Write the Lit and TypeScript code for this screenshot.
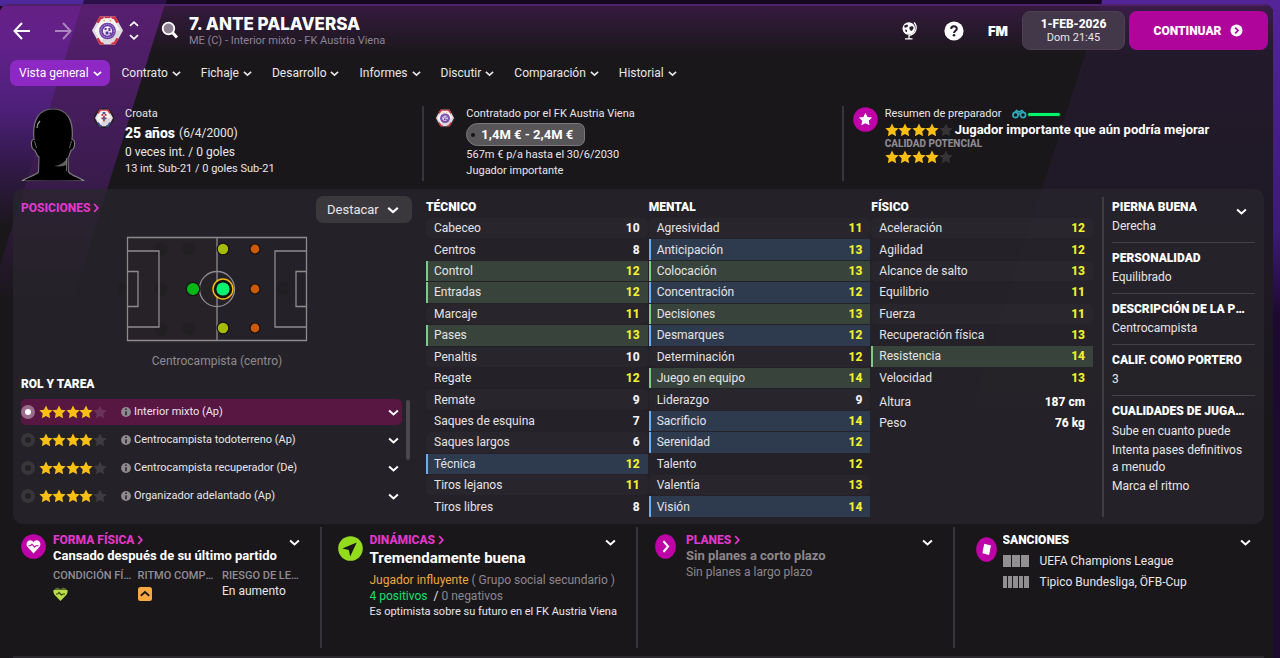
import { LitElement, html, svg, css } from "lit";
import { customElement, property, state } from "lit/decorators.js";
import { classMap } from "lit/directives/class-map.js";

const STAR = "M12 .8l3.5 7.3 7.9 1.1-5.8 5.5 1.5 8L12 18.9l-7.1 3.8 1.5-8L.6 9.2l7.9-1.1z";

@customElement("star-rating")
class StarRating extends LitElement {
  @property({ type: Number }) value = 0;
  static styles = css`
    :host { display: inline-flex; flex: none; }
    svg { width: 14px; height: 14px; display: block; margin-right: -1px; }
    svg:nth-child(even) { margin-right: 0; }
    .on { fill: #f9bf14; }
    .off { fill: #fff; opacity: 0.12; }
  `;
  render() {
    return [1, 2, 3, 4, 5].map(
      (n) => html`<svg viewBox="0 0 24 24" aria-hidden="true"><path class=${n <= this.value ? "on" : "off"} d=${STAR} /></svg>`
    );
  }
}

@customElement("chevron-icon")
class ChevronIcon extends LitElement {
  @property({ type: Number }) size = 9;
  @property() dir = "down";
  static styles = css`
    :host { display: inline-flex; flex: none; }
    svg { display: block; fill: none; stroke: currentColor; stroke-width: 1.8; stroke-linecap: butt; }
    .right { transform: rotate(-90deg); }
    .up { transform: rotate(180deg); }
  `;
  render() {
    return html`<svg class=${this.dir} width=${this.size} height=${this.size} viewBox="0 0 10 10" aria-hidden="true"><path d="M1 3.2 5 6.8 9 3.2" /></svg>`;
  }
}

@customElement("club-crest")
class ClubCrest extends LitElement {
  @property() kind = "club";
  static styles = css`
    :host { display: block; flex: none; }
    svg { display: block; width: 100%; height: 100%; }
  `;
  render() {
    const club = svg`
      <circle cx="16" cy="16.5" r="8.600" fill="#6b3fa6"/>
      <circle cx="16" cy="16.5" r="6.900" fill="none" stroke="#cdbde2" stroke-width=".8" stroke-dasharray="1.200 1"/>
      <circle cx="16" cy="16.5" r="4.800" fill="#efe9f6"/>
      <path d="M13 13.500h2v2h-2zM17 13.500h2v3h-2zM14 17h3v3h-3zM18 18h2v2h-2z" fill="#5b3196"/>
      <circle cx="12.500" cy="5.800" r=".9" fill="#e4a63c"/><circle cx="19" cy="5.800" r=".9" fill="#e4a63c"/>`;
    const nation = svg`
      <path d="M11.500 9 20.500 9 20.500 18 16 24 11.500 18z" fill="#f2eeee"/>
      <path d="M11.500 9h3v3h-3zM17.500 9h3v3h-3zM14.500 12h3v3h-3zM11.500 15h3v3h-3zM17.500 15h3v3h-3zM14.500 18h3v4h-3z" fill="#c8313a"/>
      <path d="M13.500 5.500h5v4h-5zM14 14h4v6h-4z" fill="#47639b"/>`;
    const foot = this.kind === "nation" ? "#2c3f9a" : "#d62f3f";
    return html`<svg viewBox="0 0 32 32" aria-hidden="true">
      <path d="M8 1.500h16l8 14.500-8 14.500H8L0 16z" fill="#dedade"/>
      <path d="M8 1.500h5l-6 7-2.500-1zM19 1.500h5l3.500 6-2.500 1z" fill="#d62f3f"/>
      <path d="M13 1.500h6v1.500h-6z" fill="#d62f3f"/>
      <path d="M4.500 24.500l2.500-1 6 7H8zM27.500 24.500l-2.500-1-6 7h5z" fill=${foot}/>
      <path d="M9.500 4h13l6.800 12-6.800 12h-13L2.700 16z" fill="#f5f2f4"/>
      <path d="M16 16 29.300 16 22.500 28 9.500 28z" fill="#c5bfc6" opacity=".55"/>
      ${this.kind === "nation" ? nation : club}
    </svg>`;
  }
}

type Hl = "" | "g" | "b";
type Attr = [string, number, Hl];

const TECHNICAL: Attr[] = [
  ["Cabeceo", 10, ""], ["Centros", 8, ""], ["Control", 12, "g"], ["Entradas", 12, "g"], ["Marcaje", 11, ""],
  ["Pases", 13, "g"], ["Penaltis", 10, ""], ["Regate", 12, ""], ["Remate", 9, ""], ["Saques de esquina", 7, ""],
  ["Saques largos", 6, ""], ["Técnica", 12, "b"], ["Tiros lejanos", 11, ""], ["Tiros libres", 8, ""],
];
const MENTAL: Attr[] = [
  ["Agresividad", 11, ""], ["Anticipación", 13, "b"], ["Colocación", 13, "g"], ["Concentración", 12, "b"],
  ["Decisiones", 13, "g"], ["Desmarques", 12, "b"], ["Determinación", 12, ""], ["Juego en equipo", 14, "g"],
  ["Liderazgo", 9, ""], ["Sacrificio", 14, "b"], ["Serenidad", 12, "b"], ["Talento", 12, ""], ["Valentía", 13, ""],
  ["Visión", 14, "b"],
];
const PHYSICAL: Attr[] = [
  ["Aceleración", 12, ""], ["Agilidad", 12, ""], ["Alcance de salto", 13, ""], ["Equilibrio", 11, ""],
  ["Fuerza", 11, ""], ["Recuperación física", 13, ""], ["Resistencia", 14, "g"], ["Velocidad", 13, ""],
];

@customElement("attribute-table")
class AttributeTable extends LitElement {
  @property() heading = "";
  @property({ attribute: false }) rows: Attr[] = [];
  static styles = css`
    :host { display: block; min-width: 0; }
    table { width: 100%; border-collapse: separate; border-spacing: 0 1px; }
    caption { text-align: left; font: 900 12px/20px Roboto, "Liberation Sans", sans-serif; color: #fff; }
    th, td { padding: 0; height: 20px; font-size: 12px; line-height: 16px; }
    .tall { height: 301px; }
    .short { height: 172px; }
    th { font-weight: 400; text-align: left; color: #e6e3e6; border-left: 2px solid transparent; padding-left: 6px; }
    td { font-weight: 800; text-align: right; color: #f3f1f3; padding-right: 8px; }
    .hot { color: #f1f22f; }
    .plain:nth-child(odd) > * { background: rgba(255, 255, 255, 0.02); }
    .plain:nth-child(odd) > th { border-radius: 5px 0 0 5px; }
    .plain:nth-child(odd) > td { border-radius: 0 5px 5px 0; }
    .g > * { background: #37433b; }
    .g > th { border-left-color: #7ecb86; }
    .b > * { background: #2e3b4e; }
    .b > th { border-left-color: #67aef2; }
  `;
  render() {
    return html`<table class=${this.rows.length > 8 ? "tall" : "short"}>
      <caption>${this.heading}</caption>
      <tbody>
        ${this.rows.map(
          ([name, value, hl]) => html`<tr class=${hl || "plain"}>
            <th scope="row">${name}</th>
            <td class=${value > 10 ? "hot" : ""}>${value}</td>
          </tr>`
        )}
      </tbody>
    </table>`;
  }
}

const TABS = ["Vista general", "Contrato", "Fichaje", "Desarrollo", "Informes", "Discutir", "Comparación", "Historial"];
const ROLES = ["Interior mixto (Ap)", "Centrocampista todoterreno (Ap)", "Centrocampista recuperador (De)", "Organizador adelantado (Ap)"];
const FACTS: [string, string][] = [
  ["PIERNA BUENA", "Derecha"],
  ["PERSONALIDAD", "Equilibrado"],
  ["DESCRIPCIÓN DE LA POSICIÓN", "Centrocampista"],
  ["CALIF. COMO PORTERO", "3"],
];

@customElement("app-root")
class AppRoot extends LitElement {
  @state() private role = 0;
  @state() private tab = 0;

  static styles = css`
    :host {
      display: block; position: relative; box-sizing: border-box; min-height: 100vh; overflow: hidden;
      padding: 4px 7px 0 0; background: linear-gradient(#14081f, #1c0a30 50%);
      font-family: Roboto, "Liberation Sans", sans-serif; font-size: 12px; line-height: 16px; color: #e9e6e9;
    }
    *, *::before { box-sizing: border-box; }
    h1, h2, h3, p, ul { margin: 0; padding: 0; list-style: none; }
    button, select { font: inherit; color: inherit; border: 0; background: none; padding: 0; cursor: pointer; }
    a { color: inherit; text-decoration: none; }
    .backdrop { position: absolute; top: 0; display: block; pointer-events: none; }
    .bl { left: 0; }
    .br { right: 0; }
    .frame {
      position: relative; min-height: calc(100vh - 4px); border-radius: 9px 9px 0 0; overflow: hidden;
      display: flex; flex-direction: column; background: #1a171b;
    }
    .frame > .content { position: relative; display: flex; flex-direction: column; flex: 1; }
    .sheen { position: absolute; top: 0; left: 0; right: 0; height: 50px; border-top: 2px solid #50206b;
      background: linear-gradient(rgba(90, 30, 110, 0.42), rgba(90, 30, 110, 0)); }

    header { display: flex; align-items: center; height: 53px; padding: 0 5px 0 11px; }
    .icon-btn { display: flex; align-items: center; justify-content: center; width: 22px; height: 26px; flex: none; }
    .nav { display: flex; gap: 19px; }
    .nav svg { fill: none; stroke: #fff; stroke-width: 2; }
    .dim { opacity: 0.45; }
    .crest-lg { width: 31px; height: 31px; margin-left: 18px; }
    .steps { display: flex; flex-direction: column; gap: 3px; margin-left: 6px; color: #fff; }
    .steps button { display: flex; height: 10px; }
    .search { margin: 2px 9px 0 21px; }
    .who { flex: 1; min-width: 0; }
    h1 { font: 800 17px/20px Inter, Roboto, sans-serif; color: #fff; white-space: nowrap; }
    .who p { font-size: 11px; line-height: 13px; color: #8f8295; white-space: nowrap; }
    .tools { display: flex; align-items: center; gap: 22px; margin-right: 13px; }
    .fm { font: 900 13px/16px Inter, Roboto, sans-serif; color: #fff; width: 22px; text-align: center; }
    .date { width: 103px; height: 39px; border-radius: 8px; background: #43374a; text-align: center; border: 1px solid #4d4153;
      font-size: 11px; line-height: 13px; margin-right: 4px; }
    .date b { display: block; font-size: 12px; line-height: 14px; color: #fff; font-weight: 800; }
    .continue { width: 139px; height: 39px; border-radius: 8px; background: #b0059a; color: #fff; font-size: 12px; font-weight: 900;
      display: flex; align-items: center; justify-content: center; gap: 9px; }

    .tabs { display: flex; gap: 5px; padding: 3px 10px 0; }
    .tab { display: flex; align-items: center; gap: 4px; height: 26px; padding: 0 7px 0 8px; border-radius: 7px; white-space: nowrap; }
    .tab.on { background: #8e28c4; color: #fff; padding: 0 8px 0 9px; margin-right: -1px; }

    .info { display: grid; grid-template-columns: repeat(3, 1fr); padding: 20px 10px 8px 5px; }
    .cell { display: flex; height: 75px; border-right: 2px solid #38343b; padding-left: 11px; min-width: 0; white-space: nowrap; }
    .cell:last-child { border: 0; padding-left: 10px; }
    .cell:first-child { padding-left: 16px; }
    .portrait { width: 64px; height: 73px; margin-top: 2px; flex: none; }
    .badge { display: grid; place-items: center; width: 20px; height: 20px; margin: 2px 0 0; border-radius: 50%; background: #242126; flex: none; }
    .badge club-crest { width: 18px; height: 18px; }
    .cell .badge.nat { margin-left: 9px; }
    .lines { margin-left: 11px; font-size: 11px; min-width: 0; }
    .lines > div { display: flex; align-items: center; }
    .big { font-size: 14px; line-height: 22px; font-weight: 800; color: #fff; gap: 4px; }
    .big span { font-size: 12px; font-weight: 400; color: #e9e6e9; }
    .md { font-size: 12px; line-height: 17px; }
    .tag { display: flex; align-items: center; gap: 6px; width: 119px; height: 23px; margin: 1px 0; padding-left: 4px; background: #59565a; border: 1px solid #7b787c;
      border-radius: 12px 7px 7px 12px; font-size: 13px; font-weight: 700; color: #fff; }
    .hole { width: 4px; height: 4px; border-radius: 50%; background: #161418; }
    .disc { width: 25px; height: 25px; flex: none; display: block; }
    .cell .disc { margin: 1px 0 0 -1px; }
    .knowledge { display: inline-flex; align-items: center; margin-left: 10px; }
    .bar { width: 34px; height: 5px; border: 1px solid #0b2b18; border-radius: 3px; background: #00f56b; }
    .scout { margin-left: 7px; }
    .scout b { margin-left: 3px; font-size: 13px; color: #fff; }
    .scout small { font-size: 10px; line-height: 12px; font-weight: 800; color: #8e8a8f; }

    .panel { display: flex; margin: 0 9px 0 13px; min-height: 335px; border-radius: 10px; background: rgba(40, 38, 44, 0.74); }
    .left { flex: 0 1 404px; padding: 7px 5px 0 8px; min-width: 300px; }
    .head { display: flex; justify-content: space-between; align-items: flex-start; }
    .link { display: inline-flex; align-items: center; gap: 1px; color: #e337cb; font-size: 12px; font-weight: 800; line-height: 16px; }
    .head .link { margin-top: 4px; }
    .picker { display: grid; grid-template-columns: 1fr 25px; align-items: center; width: 96px; height: 27px; border-radius: 7px; background: #3b383d; }
    .picker select { grid-area: 1 / 1 / 2 / 3; height: 27px; padding: 0 11px; appearance: none; font-size: 13px; }
    .picker chevron-icon { grid-area: 1 / 2; pointer-events: none; color: #fff; }
    .pitch { display: block; width: 196px; height: 106px; margin: 13px auto 0 97px; }
    .pos { text-align: center; margin: 10px 0 6px; padding-left: 1px; color: #8f8a90; font-size: 12px; line-height: 18px; }
    h2 { font-size: 12px; line-height: 16px; font-weight: 900; color: #fff; white-space: nowrap; overflow: hidden; text-overflow: ellipsis; }
    .roles { display: flex; margin-top: 7px; }
    .roles ul { flex: 1; display: flex; flex-direction: column; gap: 2px; }
    .role { display: flex; align-items: center; height: 26px; border-radius: 5px; padding-right: 3px; font-size: 11px; }
    .role.on { background: #571742; }
    .role label { display: flex; align-items: center; flex: 1; cursor: pointer; }
    .role button { display: flex; color: #fff; }
    .role input { appearance: none; width: 14px; height: 14px; margin: 0 4px 0 0; border-radius: 50%; border: 4px solid #39363b; background: #232126; }
    .role input:checked { border-color: #9a6d8d; background: #fff; }
    .role .i { margin: 0 3px 0 15px; flex: none; }
    .scroll { width: 4px; height: 60px; border-radius: 2px; background: #4b484d; margin: 1px 2px 0 4px; }

    .attrs { flex: 1 1 676px; display: grid; grid-template-columns: repeat(3, 1fr); gap: 1px; padding: 8px 9px 0 9px; min-width: 0; }
    .sizes { display: grid; grid-template-columns: auto auto; justify-content: space-between; margin: 3px 0 0; padding: 0 8px; font-size: 12px; line-height: 21px; }
    .sizes dt { color: #e6e3e6; }
    .sizes dd { margin: 0; text-align: right; font-weight: 800; color: #fff; }
    .facts { flex: 0 0 162px; min-width: 0; margin: 8px 0 7px; padding: 0 9px 0 8px; border-left: 2px solid #3f3c42; }
    .facts section { padding: 7px 0 8px; border-bottom: 1px solid #444147; }
    .facts section:first-child { padding-top: 2px; }
    .facts section:last-child { border: 0; }
    .facts section > h2 { margin-right: 5px; }
    .facts p { font-size: 12px; margin-top: 3px; }
    .facts .traits { margin-top: 4px; padding-right: 7px; }
    .facts .traits p { line-height: 17px; margin: 0 0 2px; }
    .row { display: flex; justify-content: space-between; align-items: center; padding-right: 8px; color: #fff; }
    .row button { display: flex; padding-top: 5px; }
    .facts .row { height: 16px; }
    .facts .row button { padding-top: 8px; }

    .bottom { flex: 1; display: grid; grid-template-columns: repeat(4, 1fr); margin: 3px 2px 8px 5px; min-height: 121px; }
    .block { display: flex; align-items: flex-start; border-right: 2px solid #38343b; padding: 5px 19px 0 15px; min-width: 0; }
    .block:last-child { border: 0; }
    .block > .disc { margin: 2px 0 0 1px; }
    .block > .arrow { margin-top: 4px; }
    .block > .card { margin-top: 5px; }
    .block > .next { width: 21px; margin-left: 2px; margin-right: 3px; }
    .block > .card { width: 21px; margin-left: 6px; margin-right: -1px; }
    .txt { flex: 1; min-width: 0; margin-left: 7px; white-space: nowrap; }
    .txt .row { padding: 0 1px 0 0; line-height: 16px; height: 16px; }
    .txt b { font-weight: 700; color: #fff; font-size: 13px; }
    .minis { display: grid; grid-template-columns: repeat(3, minmax(0, 1fr)); gap: 4px; margin: 4px -2px 0 0; }
    .minis h3 { font-size: 11px; line-height: 15px; font-weight: 500; color: #928e93; overflow: hidden; text-overflow: ellipsis; }
    .minis svg { display: block; margin-top: 4px; }
    .txt b.xl { display: block; font-size: 15px; line-height: 18px; margin: 1px 0 5px; }
    .grey, .txt b.grey { color: #8b878c; }
    .orange { color: #eea63c; }
    .green { color: #12e06a; }
    .sm { font-size: 11px; line-height: 15px; }
    .ban { display: flex; align-items: center; gap: 11px; height: 21px; font-size: 12px; }
    .row + .ban { margin-top: 2px; }
    .cards { display: flex; gap: 1px; width: 26px; height: 12px; }
    .cards i { flex: 1; background: #928f92; }
    .rule { height: 2px; margin: 0 9px 0 13px; background: #2c292e; }
  `;

  private icon(name: string) {
    const glyph: Record<string, unknown> = {
      star: svg`<path fill="#fff" transform="translate(5.500 5.200) scale(.58)" d=${STAR} />`,
      heart: svg`<path fill="#fff" d="M12.500 19.500 6.200 12.600C4.500 9.500 6.500 6.300 9.300 6.300c1.500 0 2.600.8 3.200 2 .6-1.200 1.700-2 3.200-2 2.800 0 4.800 3.200 3.100 6.300z"/><path fill="none" stroke="#b0059a" stroke-width="1.100" d="M7.500 11.700h2l1.500-1.500 2.500 2.700 1.500-1.200h2.500"/>`,
      arrow: svg`<path fill="#1a171b" d="M18.700 6.400 4.300 12.600l6.500 1.300 1.400 6.600z"/>`,
      next: svg`<path fill="none" stroke="#fff" stroke-width="2.300" d="M10 7.200l5.500 5.300-5.500 5.300"/>`,
      card: svg`<path fill="#fff" d="M9.800 6.800l8 1.700-2.200 9.600-8-1.800z"/>`,
    };
    const fill = name === "arrow" ? "#93dc1d" : "#be02a8";
    return html`<svg class="disc ${name}" viewBox="0 0 25 25" preserveAspectRatio="none" aria-hidden="true"><circle cx="12.500" cy="12.500" r="12.300" fill=${fill}/>${glyph[name]}</svg>`;
  }

  private pitch() {
    const ghosts = [[43, 13], [71, 13], [43, 53], [2, 53], [43, 93], [71, 93], [165, 53]];
    return html`<svg class="pitch" viewBox="0 0 196 106" role="img" aria-label="Posiciones">
      <rect x="9" y="2" width="89" height="102" fill="#2a2226" opacity=".4"/>
      ${ghosts.map(([x, y]) => svg`<circle cx=${x} cy=${y} r="6.500" fill="#1d1b1f" opacity=".4"/>`)}
      <g fill="none" stroke="#8e8b8f" stroke-width="1.300">
        <path d="M9.500 1.500h179v103h-179zM99 1.500v103M9.500 15H41v76H9.500M9.500 35.500H20v35H9.500M188.500 15H157v76h31.500M188.500 35.500H178v35h10.500"/>
        <circle cx="99" cy="53" r="17.500"/>
      </g>
      <g stroke="#151216" stroke-width="1.200">
        ${[13, 92].map((y) => svg`<circle cx="105" cy=${y} r="5.800" fill="#a5bb06"/>`)}
        ${[13, 53, 92].map((y) => svg`<circle cx="137" cy=${y} r="5" fill="#cd5a05"/>`)}
        <circle cx="75" cy="53" r="6.700" fill="#07b718"/>
        <circle cx="105" cy="53" r="10" fill="#151216" stroke="#f4b914" stroke-width="1.500"/>
        <circle cx="105" cy="53" r="7.200" fill="#05f46f"/>
      </g>
    </svg>`;
  }

  private portrait() {
    return html`<svg class="portrait" viewBox="0 0 64 73" role="img" aria-label="Retrato">
      <defs><linearGradient id="rim"><stop offset="0" stop-color="#8d8d8d"/><stop offset=".5" stop-color="#555"/><stop offset="1" stop-color="#8d8d8d"/></linearGradient></defs>
      <path fill="#000" stroke="url(#rim)" stroke-width="1.200" d="M1 73C6 69 14 68 17.500 64L18 49C15 47 15 43 13.500 42 10 41 9 31 13 31.500 11 12 18 1 32 1S53 12 51 31.500C55 31 54 41 50.500 42 49 43 49 47 47 50L47.500 64C51 68 58 69 63 73z"/>
      <path fill="none" stroke="#999" stroke-width="1.300" d="M16 20c0-3 1-5 3-7"/>
      <path fill="none" stroke="#666" stroke-width="1" d="M13.500 33l2 7M50.500 33l-2 7M45.500 50v13"/>
      <path fill="#777" opacity=".8" d="M46 50c-2 4-6 7-13 8 6 .8 10 .5 13-1.500z"/>
    </svg>`;
  }

  private head(title: string, link = true) {
    return html`<div class="row">
      ${link ? html`<h2><a class="link" href="#">${title}<chevron-icon dir="right" size="10"></chevron-icon></a></h2>` : html`<h2>${title}</h2>`}
      <button aria-label="Opciones"><chevron-icon size="11"></chevron-icon></button>
    </div>`;
  }

  render() {
    return html`
      <svg class="backdrop br" width="200" height="658" viewBox="0 0 200 658" aria-hidden="true">
        <defs><linearGradient id="gr" x2="0" y2="1"><stop offset="0" stop-color="#542499"/><stop offset=".35" stop-color="#3c1a78"/><stop offset=".48" stop-color="#1c0a30"/></linearGradient></defs>
        <path fill="url(#gr)" d="M22 0h178v658H-80z"/>
      </svg>
      <svg class="backdrop bl" width="200" height="6" viewBox="0 0 200 6" aria-hidden="true">
        <path fill="#2b1049" d="M0 0h167l-2 6H0z"/><path fill="#4d289b" d="M0 0h84l-2 6H0z"/>
      </svg>
      <div class="frame">
        <svg class="backdrop bl" width="170" height="320" viewBox="0 0 170 320" aria-hidden="true">
          <defs>
            <linearGradient id="g1" x2="0" y2="1"><stop offset="0" stop-color="#561f70"/><stop offset=".55" stop-color="#3a1b4d"/><stop offset=".92" stop-color="#1a171b"/></linearGradient>
            <linearGradient id="g2" x2="0" y2="1"><stop offset="0" stop-color="#6f2197"/><stop offset=".4" stop-color="#4d2079"/><stop offset=".6" stop-color="#34194c"/><stop offset=".85" stop-color="#1a171b"/></linearGradient>
          </defs>
          <path fill="url(#g1)" d="M0 0h165L65 320H0z"/>
          <path fill="url(#g2)" d="M0 0h82L0 262z"/>
        </svg>
        <svg class="backdrop br" width="340" height="658" viewBox="0 0 340 658" aria-hidden="true">
          <defs><linearGradient id="g3" x2="0" y2="1"><stop offset="0" stop-color="#231a2c"/><stop offset=".4" stop-color="#1f1926"/><stop offset=".75" stop-color="#1a171b"/></linearGradient></defs>
          <path fill="url(#g3)" d="M168 0h172v560L-10 560z"/>
        </svg>
        <div class="sheen"></div>
        <div class="content">
          <header>
            <div class="nav">
              <button class="icon-btn" aria-label="Atrás"><svg width="20" height="20" viewBox="0 0 20 20"><path d="M18 10H3M10 2 2.500 10l7.500 8"/></svg></button>
              <button class="icon-btn dim" aria-label="Adelante"><svg width="20" height="20" viewBox="0 0 20 20"><path d="M2 10h15M10 2l7.500 8-7.500 8"/></svg></button>
            </div>
            <club-crest class="crest-lg"></club-crest>
            <div class="steps">
              <button aria-label="Anterior"><chevron-icon dir="up" size="10"></chevron-icon></button>
              <button aria-label="Siguiente"><chevron-icon size="10"></chevron-icon></button>
            </div>
            <button class="search" aria-label="Buscar"><svg width="20" height="20" viewBox="0 0 20 20"><path d="M12 12l5 5.500" stroke="#fff" stroke-width="3"/><circle cx="8.500" cy="8.500" r="5.800" fill="#8d8091" stroke="#fff" stroke-width="1.800"/></svg></button>
            <div class="who">
              <h1>7. ANTE PALAVERSA</h1>
              <p>ME (C) - Interior mixto - FK Austria Viena</p>
            </div>
            <div class="tools">
              <button class="icon-btn" aria-label="Mundo"><svg width="18" height="19" viewBox="0 0 18 19"><circle cx="7.800" cy="7.500" r="6.300" fill="#fff"/><path d="M3.300 4.500l3-1 1 1.500-2 1.500H3.300zM8.300 6l3-1 1.500 2-2 3-2-1zM4 8.500l2 .5v2L4.500 10.500zM10 2.500l2 1" fill="#2b1a33"/><path d="M13 1.500c4 4 2.500 12-5.500 13M8 14.500v3M4 17.800h7.500" fill="none" stroke="#fff" stroke-width="1.300"/></svg></button>
              <button class="icon-btn" aria-label="Ayuda"><svg width="20" height="20" viewBox="0 0 20 20"><circle cx="10" cy="10" r="9.600" fill="#fff"/><path d="M7.200 8c0-3.600 5.600-3.500 5.600-.3 0 2-2.700 2-2.700 4.200" fill="none" stroke="#251a2b" stroke-width="2"/><circle cx="10" cy="14.300" r="1.300" fill="#251a2b"/></svg></button>
              <button class="fm">FM</button>
            </div>
            <button class="date"><b>1-FEB-2026</b>Dom 21:45</button>
            <button class="continue">CONTINUAR
              <svg width="13" height="13" viewBox="0 0 13 13" aria-hidden="true"><circle cx="6.500" cy="6.500" r="6" fill="#fff"/><path d="M5.200 3.700 8 6.500 5.200 9.300" fill="none" stroke="#b0059a" stroke-width="1.700"/></svg>
            </button>
          </header>

          <nav class="tabs">
            ${TABS.map((t, i) => html`<button class=${classMap({ tab: true, on: i === this.tab })} @click=${() => (this.tab = i)}>${t}<chevron-icon></chevron-icon></button>`)}
          </nav>

          <div class="info">
            <div class="cell">
              ${this.portrait()}
              <span class="badge nat"><club-crest kind="nation"></club-crest></span>
              <div class="lines">
                <div>Croata</div>
                <div class="big">25 años <span>(6/4/2000)</span></div>
                <div class="md">0 veces int. / 0 goles</div>
                <div>13 int. Sub-21 / 0 goles Sub-21</div>
              </div>
            </div>
            <div class="cell">
              <span class="badge"><club-crest></club-crest></span>
              <div class="lines">
                <div>Contratado por el FK Austria Viena</div>
                <div class="tag"><i class="hole"></i>1,4M € - 2,4M €</div>
                <div>567m € p/a hasta el 30/6/2030</div>
                <div>Jugador importante</div>
              </div>
            </div>
            <div class="cell">
              ${this.icon("star")}
              <div class="lines scout">
                <div>Resumen de preparador
                  <span class="knowledge">
                    <svg width="15" height="10" viewBox="0 0 15 10" aria-hidden="true"><g fill="none" stroke="#2fa9b8" stroke-width="1.700"><circle cx="3.500" cy="6" r="2.600"/><circle cx="11" cy="6" r="2.600"/><path d="M6 5h2.500M3 3 4.500 1.500 7.200 3 10 1.500 11.500 3"/></g></svg>
                    <span class="bar"></span>
                  </span>
                </div>
                <div><star-rating value="4"></star-rating><b>Jugador importante que aún podría mejorar</b></div>
                <div><small>CALIDAD POTENCIAL</small></div>
                <div><star-rating value="4"></star-rating></div>
              </div>
            </div>
          </div>

          <main class="panel">
            <section class="left">
              <div class="head">
                <a class="link" href="#">POSICIONES<chevron-icon dir="right" size="10"></chevron-icon></a>
                <label class="picker">
                  <select aria-label="Destacar"><option>Destacar</option></select>
                  <chevron-icon size="12"></chevron-icon>
                </label>
              </div>
              ${this.pitch()}
              <p class="pos">Centrocampista (centro)</p>
              <h2>ROL Y TAREA</h2>
              <div class="roles">
                <ul>
                  ${ROLES.map(
                    (r, i) => html`<li class=${classMap({ role: true, on: i === this.role })}>
                      <label>
                        <input type="radio" name="role" .checked=${i === this.role} @change=${() => (this.role = i)} />
                        <star-rating value="4"></star-rating>
                        <svg class="i" width="10" height="10" viewBox="0 0 10 10" aria-hidden="true"><circle cx="5" cy="5" r="4.900" fill="#8f8a90"/><path d="M5 4.200v4M5 1.600v1.500" stroke="#232126" stroke-width="1.500" fill="none"/></svg>
                        ${r}
                      </label>
                      <button aria-label="Ver tareas"><chevron-icon size="11"></chevron-icon></button>
                    </li>`
                  )}
                </ul>
                <div class="scroll"></div>
              </div>
            </section>

            <section class="attrs">
              <attribute-table heading="TÉCNICO" .rows=${TECHNICAL}></attribute-table>
              <attribute-table heading="MENTAL" .rows=${MENTAL}></attribute-table>
              <div>
                <attribute-table heading="FÍSICO" .rows=${PHYSICAL}></attribute-table>
                <dl class="sizes">
                  <dt>Altura</dt><dd>187 cm</dd>
                  <dt>Peso</dt><dd>76 kg</dd>
                </dl>
              </div>
            </section>

            <aside class="facts">
              ${FACTS.map(
                ([k, v], i) => html`<section>
                  ${i === 0 ? html`<div class="row"><h2>${k}</h2><button aria-label="Opciones"><chevron-icon size="11"></chevron-icon></button></div>` : html`<h2>${k}</h2>`}
                  <p>${v}</p>
                </section>`
              )}
              <section>
                <h2>CUALIDADES DE JUGADOR</h2>
                <div class="traits">
                  <p>Sube en cuanto puede</p>
                  <p>Intenta pases definitivos a menudo</p>
                  <p>Marca el ritmo</p>
                </div>
              </section>
            </aside>
          </main>

          <div class="bottom">
            <section class="block">
              ${this.icon("heart")}
              <div class="txt">
                ${this.head("FORMA FÍSICA")}
                <b>Cansado después de su último partido</b>
                <div class="minis">
                  <div><h3>CONDICIÓN FÍSICA</h3>
                    <svg width="15" height="15" viewBox="0 0 15 15" aria-hidden="true"><path fill="#5d6a31" d="M1 3.500C2 0 6 0 7.500 2.500 9 0 13 0 14 3.500z"/><path fill="#b9de48" d="M.5 3h14c.5 2-.5 4-1.500 5.200L7.500 14 2 8.200C1 7 0 5 .5 3z"/><path fill="none" stroke="#3a4a14" stroke-width="1.200" d="M3 7h2l1-1.500L8.500 8 10 7h2"/></svg>
                  </div>
                  <div><h3>RITMO COMPETITIVO</h3>
                    <svg width="14" height="14" viewBox="0 0 14 14" aria-hidden="true"><rect width="14" height="14" rx="2.500" fill="#f7a941"/><path fill="none" stroke="#1a171b" stroke-width="1.800" d="M2.800 8.700 7 5l4.200 3.700"/></svg>
                  </div>
                  <div><h3>RIESGO DE LESIONES</h3>En aumento</div>
                </div>
              </div>
            </section>
            <section class="block">
              ${this.icon("arrow")}
              <div class="txt">
                ${this.head("DINÁMICAS")}
                <b class="xl">Tremendamente buena</b>
                <div><span class="orange">Jugador influyente</span> <span class="grey">( Grupo social secundario )</span></div>
                <div><span class="green">4 positivos</span> &nbsp;/ <span class="grey">0 negativos</span></div>
                <div class="sm">Es optimista sobre su futuro en el FK Austria Viena</div>
              </div>
            </section>
            <section class="block">
              ${this.icon("next")}
              <div class="txt">
                ${this.head("PLANES")}
                <b class="grey">Sin planes a corto plazo</b>
                <div class="grey">Sin planes a largo plazo</div>
              </div>
            </section>
            <section class="block">
              ${this.icon("card")}
              <div class="txt">
                ${this.head("SANCIONES", false)}
                <div class="ban"><span class="cards"><i></i><i></i><i></i></span>UEFA Champions League</div>
                <div class="ban"><span class="cards"><i></i><i></i><i></i><i></i><i></i></span>Tipico Bundesliga, ÖFB-Cup</div>
              </div>
            </section>
          </div>
          <div class="rule"></div>
        </div>
      </div>
    `;
  }
}
